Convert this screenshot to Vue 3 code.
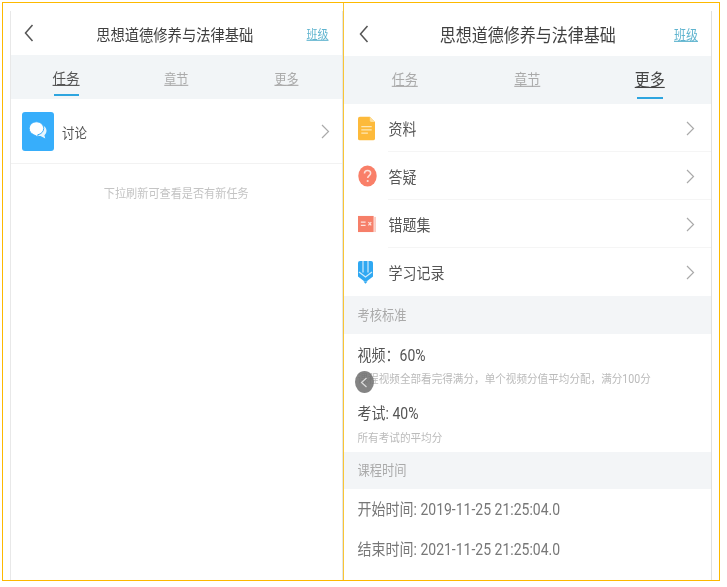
<script setup>
const leftTabs = [
  { label: '任务', active: true },
  { label: '章节' },
  { label: '更多' }
]
const rightTabs = [
  { label: '任务' },
  { label: '章节' },
  { label: '更多', active: true }
]
const menu = [
  { label: '资料', icon: 'doc' },
  { label: '答疑', icon: 'question' },
  { label: '错题集', icon: 'book' },
  { label: '学习记录', icon: 'pencil' }
]
</script>

<template>
  <div class="frame">
    <section class="panel left">
      <header class="head">
        <svg class="back" width="10" height="18" viewBox="0 0 10 18"><polyline points="8.5,1 1.5,9 8.5,17" /></svg>
        <h1 class="title"><span class="tx">思想道德修养与法律基础</span></h1>
        <a class="cls tx">班级</a>
      </header>
      <nav class="tabs">
        <div v-for="t in leftTabs" :key="t.label" class="tab" :class="{ on: t.active }">
          <span class="tab-text tx">{{ t.label }}</span>
          <i v-if="t.active" class="bar"></i>
        </div>
      </nav>
      <div class="discuss">
        <div class="tile">
          <svg width="20" height="20" viewBox="0 0 20 20">
            <path d="M13 4c3.300.4 5.500 2.900 5.500 5.800 0 1.800-.8 3.300-2.100 4.400l.9 3.300-4.800-2.400H8z" fill="#e6f5fe" />
            <path d="M8.500.8C4.400.8 1.200 3.800 1.200 7.500c0 2.700 1.700 5 4.200 6.100l5 2.600-.7-2.400c3.400-.6 6-3.200 6-6.300 0-3.700-3.200-6.700-7.200-6.700z" fill="#fff" stroke="#37aefb" stroke-width="1" />
          </svg>
        </div>
        <span class="discuss-text"><span class="tx">讨论</span></span>
        <svg class="chev" width="9" height="15" viewBox="0 0 9 15"><polyline points="1,1 7.5,7.5 1,14" /></svg>
      </div>
      <p class="hint"><span class="tx">下拉刷新可查看是否有新任务</span></p>
    </section>

    <div class="divider"></div>

    <section class="panel right">
      <header class="head head-r">
        <svg class="back" width="10" height="18" viewBox="0 0 10 18"><polyline points="8.5,1 1.5,9 8.5,17" /></svg>
        <h1 class="title title-r"><span class="tx">思想道德修养与法律基础</span></h1>
        <a class="cls cls-r tx">班级</a>
      </header>
      <nav class="tabs tabs-r">
        <div v-for="t in rightTabs" :key="t.label" class="tab" :class="{ on: t.active }">
          <span class="tab-text tx">{{ t.label }}</span>
          <i v-if="t.active" class="bar"></i>
        </div>
      </nav>
      <ul class="menu">
        <li v-for="m in menu" :key="m.label" class="menu-row">
          <span class="ico">
            <svg v-if="m.icon === 'doc'" width="17" height="25" viewBox="0 0 18 25">
              <path d="M2 0h10.500L18 5.500V23a2 2 0 0 1-2 2H2a2 2 0 0 1-2-2V2a2 2 0 0 1 2-2z" fill="#fdba3b" />
              <path d="M12.500 0v4a1.500 1.500 0 0 0 1.500 1.500h4z" fill="#fedd96" />
              <path d="M3.500 10.500h11M3.500 14h11M3.500 17.500h7" stroke="#fee7b5" stroke-width="1.300" />
            </svg>
            <svg v-else-if="m.icon === 'question'" width="19" height="22" viewBox="0 0 20 22">
              <ellipse cx="10" cy="11" rx="9.700" ry="11" fill="#f97f68" />
              <path d="M6.800 8.400c0-2 1.400-3.200 3.300-3.200s3.200 1.200 3.200 2.900c0 2.300-3.100 2.600-3.100 5" fill="none" stroke="#fde0d9" stroke-width="1.600" />
              <circle cx="10.200" cy="16.200" r="1.100" fill="#fde0d9" />
            </svg>
            <svg v-else-if="m.icon === 'book'" width="18" height="18" viewBox="0 0 19 18">
              <rect x="0" y="0.500" width="16.500" height="17" fill="#f67f69" />
              <rect x="17.200" y="1.500" width="1.600" height="16" fill="#fbc1b5" />
              <path d="M3 7h5M3 10.500h5M11 7l3 3.500M14 7l-3 3.500" stroke="#fde3dd" stroke-width="1.200" />
            </svg>
            <svg v-else width="15" height="23" viewBox="0 0 15 23">
              <path d="M0 2a2 2 0 0 1 2-2h11a2 2 0 0 1 2 2v13.500L8.500 20.500h-2L0 15.500z" fill="#2fa8f2" />
              <path d="M5 0v11.500M10 0v11.500M1 11l6.500 5 6.500-5" fill="none" stroke="#cfeafb" stroke-width="1.200" />
              <path d="M5.500 20.500h4l-2 2.300z" fill="#2fa8f2" />
            </svg>
          </span>
          <span class="menu-text"><span class="tx">{{ m.label }}</span></span>
          <svg class="chev" width="9" height="15" viewBox="0 0 9 15"><polyline points="1,1 7.5,7.5 1,14" /></svg>
        </li>
      </ul>
      <h2 class="section sec-a"><span class="tx">考核标准</span></h2>
      <div class="rules">
        <div class="rule">
          <p class="rule-title"><span class="tx">视频：60%</span></p>
          <p class="rule-desc"><span class="tx">课程视频全部看完得满分，单个视频分值平均分配，满分100分</span></p>
        </div>
        <div class="rule rule-2">
          <p class="rule-title"><span class="tx">考试: 40%</span></p>
          <p class="rule-desc"><span class="tx">所有考试的平均分</span></p>
        </div>
      </div>
      <h2 class="section sec-b"><span class="tx">课程时间</span></h2>
      <p class="time"><span class="tx">开始时间: 2019-11-25 21:25:04.0</span></p>
      <p class="time"><span class="tx">结束时间: 2021-11-25 21:25:04.0</span></p>
      <button class="float" aria-label="返回">
        <svg width="8" height="11" viewBox="0 0 8 11"><polyline points="6.5,1 1.5,5.5 6.5,10" /></svg>
      </button>
    </section>
  </div>
</template>

<style>
html, body { margin: 0; background: #fff; }
</style>

<style scoped>
* { box-sizing: border-box; }
.frame {
  margin: 2px 0 0 2px;
  width: 718px;
  height: 579px;
  border: 1px solid #fdb900;
  padding: 8px 7px 0 7px;
  display: flex;
  background: #fff;
  font-family: "Roboto", "Noto Sans CJK SC", sans-serif;
  color: #555;
}
.tx { display: inline-block; transform: scaleY(1.12); }
.panel {
  position: relative;
  display: flex;
  flex-direction: column;
  filter: blur(0.35px);
}
.left {
  width: 333px;
  border-left: 1px solid #e8e8e8;
  border-right: 1px solid #e4e4e4;
}
.divider {
  width: 1px;
  margin-top: -8px;
  background: #f8c535;
  flex: none;
}
.right {
  width: 369px;
  border-right: 1px solid #e0e0e0;
}
.head {
  height: 44px;
  display: flex;
  align-items: center;
  padding: 0 13px;
  flex: none;
}
.head-r { height: 45px; padding: 0 13px 0 15px; }
.back { fill: none; stroke: #555; stroke-width: 1.5; flex: none; }
.title {
  flex: 1;
  margin: 0;
  text-align: center;
  font-size: 14.3px;
  font-weight: 400;
  color: #3f3f3f;
  padding-left: 9px;
}
.title-r { font-size: 16px; padding-left: 13px; }
.cls {
  font-size: 11px;
  color: #5fb4cf;
  text-decoration: underline;
  flex: none;
}
.cls-r { font-size: 12px; }
.tabs {
  height: 44px;
  flex: none;
  display: grid;
  grid-template-columns: repeat(3, 1fr);
  background: #f2f5f7;
}
.tabs-r { height: 48px; }
.tab {
  position: relative;
  display: flex;
  justify-content: center;
  align-items: center;
  font-size: 12px;
  color: #aaa;
}
.tab-text { text-decoration: underline; text-underline-offset: 1px; }
.tab.on { font-size: 13.5px; color: #555; }
.tabs-r .tab { font-size: 13px; padding-bottom: 3px; }
.tabs-r .tab.on { font-size: 15px; color: #444; }
.bar {
  position: absolute;
  left: 50%;
  bottom: 3px;
  width: 25px;
  height: 2px;
  margin-left: -12.5px;
  background: #2ea5df;
}
.tabs-r .bar { bottom: 5px; width: 26px; margin-left: -13px; }
.discuss {
  height: 65px;
  flex: none;
  display: flex;
  align-items: center;
  padding: 0 12px 0 11px;
  border-bottom: 1px solid #f2f2f2;
}
.tile {
  width: 32px;
  height: 39px;
  border-radius: 3px;
  background: #37aefb;
  display: flex;
  align-items: center;
  justify-content: center;
  flex: none;
}
.discuss-text { margin-left: 8px; font-size: 12.5px; flex: 1; }
.chev { fill: none; stroke: #aaa; stroke-width: 1.2; flex: none; }
.hint {
  margin: 22px 0 0;
  text-align: center;
  font-size: 11.15px;
  line-height: 18px;
  color: #c4c4c4;
}
.menu { list-style: none; margin: 0; padding: 0; flex: none; }
.menu-row {
  position: relative;
  height: 48px;
  display: flex;
  align-items: center;
  padding: 0 16px 0 13px;
}
.menu-row:not(:last-child)::after {
  content: "";
  position: absolute;
  left: 44px;
  right: 0;
  bottom: 0;
  height: 1px;
  background: #f5f5f5;
}
.ico { width: 32px; flex: none; display: flex; }
.ico svg { margin-left: 1px; }
.menu-text { flex: 1; font-size: 14px; color: #555; }
.section {
  margin: 0;
  flex: none;
  background: #f3f5f7;
  font-size: 12.25px;
  font-weight: 400;
  color: #aaa;
  padding-left: 14px;
}
.sec-a { height: 38px; line-height: 38px; padding-top: 1px; }
.sec-b { height: 37px; line-height: 37px; padding-top: 1px; }
.rules { height: 118px; flex: none; padding: 11px 14px 0; }
.rule-2 { margin-top: 15px; }
.rule-title { margin: 0; font-size: 14px; line-height: 20px; color: #555; }
.rule-desc { margin: 7px 0 0; font-size: 10.6px; line-height: 16px; color: #bbb; }
.rule-2 .rule-desc { margin-top: 8px; }
.time {
  margin: 0;
  height: 40px;
  line-height: 40px;
  padding-left: 14px;
  font-size: 14px;
  color: #777;
  flex: none;
}
.float {
  position: absolute;
  left: 11px;
  top: 360px;
  width: 19px;
  height: 22px;
  border-radius: 50%;
  border: 0;
  padding: 0;
  background: rgba(110, 110, 110, .85);
  display: flex;
  align-items: center;
  justify-content: center;
}
.float svg { fill: none; stroke: #ddd; stroke-width: 1.2; }
</style>
